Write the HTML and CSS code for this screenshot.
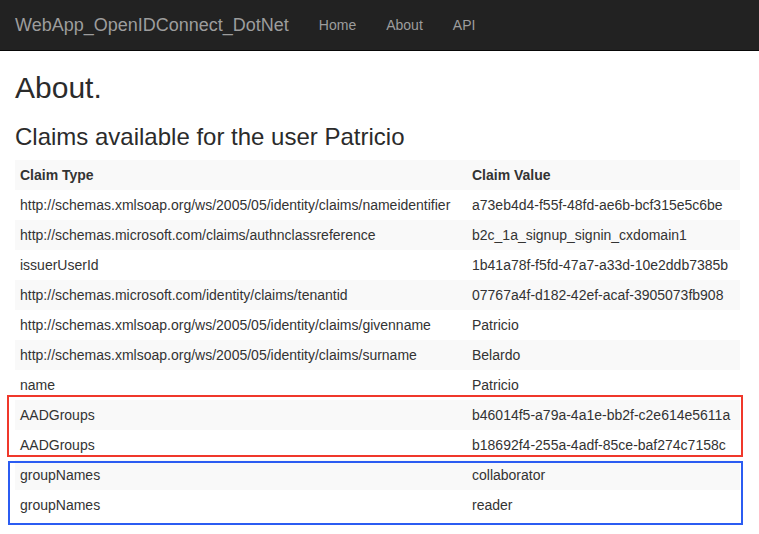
FILE: index.html
```html
<!DOCTYPE html>
<html lang="en">
<head>
<meta charset="utf-8">
<title>About</title>
<link rel="stylesheet" href="styles.css">
</head>
<body>
<nav class="navbar">
  <a class="brand" href="#">WebApp_OpenIDConnect_DotNet</a>
  <ul class="nav">
    <li><a href="#">Home</a></li>
    <li><a href="#">About</a></li>
    <li><a href="#">API</a></li>
  </ul>
</nav>
<main class="content">
  <h2 class="title">About.</h2>
  <h3 class="subtitle">Claims available for the user Patricio</h3>
  <div class="table-wrap">
    <table class="claims">
      <colgroup><col class="col-type"><col class="col-value"></colgroup>
      <tbody>
        <tr class="head"><td>Claim Type</td><td>Claim Value</td></tr>
        <tr><td>http://schemas.xmlsoap.org/ws/2005/05/identity/claims/nameidentifier</td><td>a73eb4d4-f55f-48fd-ae6b-bcf315e5c6be</td></tr>
        <tr><td>http://schemas.microsoft.com/claims/authnclassreference</td><td>b2c_1a_signup_signin_cxdomain1</td></tr>
        <tr><td>issuerUserId</td><td>1b41a78f-f5fd-47a7-a33d-10e2ddb7385b</td></tr>
        <tr><td>http://schemas.microsoft.com/identity/claims/tenantid</td><td>07767a4f-d182-42ef-acaf-3905073fb908</td></tr>
        <tr><td>http://schemas.xmlsoap.org/ws/2005/05/identity/claims/givenname</td><td>Patricio</td></tr>
        <tr><td>http://schemas.xmlsoap.org/ws/2005/05/identity/claims/surname</td><td>Belardo</td></tr>
        <tr><td>name</td><td>Patricio</td></tr>
        <tr><td>AADGroups</td><td>b46014f5-a79a-4a1e-bb2f-c2e614e5611a</td></tr>
        <tr><td>AADGroups</td><td>b18692f4-255a-4adf-85ce-baf274c7158c</td></tr>
        <tr><td>groupNames</td><td>collaborator</td></tr>
        <tr><td>groupNames</td><td>reader</td></tr>
      </tbody>
    </table>
    <div class="mark mark-red"></div>
    <div class="mark mark-blue"></div>
  </div>
</main>
</body>
</html>
```
FILE: styles.css
```css
* { box-sizing: border-box; }
html, body { margin: 0; padding: 0; }
body {
  font-family: "Liberation Sans", Arial, sans-serif;
  font-size: 14px;
  line-height: 20px;
  color: #333;
  background: #fff;
}
.navbar {
  display: flex;
  align-items: center;
  height: 51px;
  background: #222;
  border-bottom: 1px solid #080808;
}
.brand {
  padding: 15px;
  font-size: 18px;
  line-height: 20px;
  color: #9d9d9d;
  text-decoration: none;
}
.nav {
  display: flex;
  list-style: none;
  margin: 0;
  padding: 0;
}
.nav a {
  display: block;
  padding: 15px;
  line-height: 20px;
  color: #9d9d9d;
  text-decoration: none;
}
.content {
  padding: 0 19px 20px 15px;
}
.title {
  font-size: 30px;
  font-weight: 500;
  line-height: 33px;
  margin: 20px 0 10px;
  color: #2b2b2b;
}
.subtitle {
  font-size: 24px;
  font-weight: 500;
  line-height: 26.4px;
  margin: 20px 0 10px;
  color: #2b2b2b;
}
.table-wrap {
  position: relative;
}
.claims {
  width: 100%;
  border-collapse: collapse;
  table-layout: fixed;
}
.col-type { width: 452px; }
.claims td {
  padding: 5px;
  line-height: 20px;
  white-space: nowrap;
  vertical-align: top;
}
.claims tr:nth-child(odd) { background: #f9f9f9; }
.claims .head td { font-weight: bold; }
.mark {
  position: absolute;
  left: -8px;
  right: -3px;
  border: 2px solid;
}
.mark-red {
  top: 235px;
  height: 62px;
  border-color: #f0382b;
}
.mark-blue {
  top: 301px;
  height: 64px;
  left: -7px;
  border-color: #2b5cf2;
}
```
